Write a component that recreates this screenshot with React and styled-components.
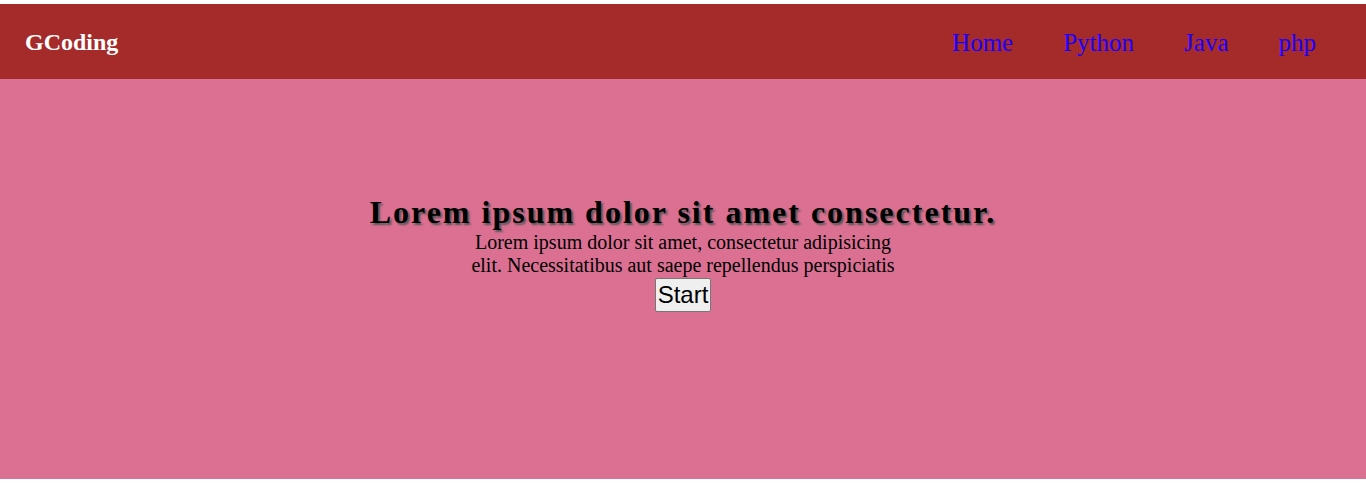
import React from 'react'
import styled, { createGlobalStyle } from 'styled-components'

const GlobalStyle = createGlobalStyle`
  body {
    margin: 0;
    padding-top: 4px;
    background: #ffffff;
    font-family: "Liberation Serif", "Times New Roman", serif;
  }
`;

const links = ['Home', 'Python', 'Java', 'php'];

const App = () => {
    return (
        <>
            <GlobalStyle />
            <Navbar>
                <Logo>GCoding</Logo>
                <NavList>
                    {links.map(link => (
                        <NavItem key={link}>
                            <NavLink href="#">{link}</NavLink>
                        </NavItem>
                    ))}
                </NavList>
            </Navbar>
            <Hero>
                <Title>Lorem ipsum dolor sit amet consectetur.</Title>
                <Text>
                    Lorem ipsum dolor sit amet, consectetur adipisicing elit. Necessitatibus aut saepe repellendus perspiciatis
                </Text>
                <StartButton>Start</StartButton>
            </Hero>
        </>
    )
}

export default App;

const Navbar = styled.nav`
  height: 75px;
  background-color: #a52a2a;
  display: flex;
  align-items: center;
  justify-content: space-between;
  padding: 0 25px;
`;

const Logo = styled.div`
  margin-top: 2px;
  font-size: 24px;
  font-weight: 700;
  color: #ffffff;
`;

const NavList = styled.ul`
  list-style: none;
  display: flex;
  gap: 50px;
  margin: 2px 0 0;
  padding: 0 25px 0 0;
`;

const NavItem = styled.li`
  font-size: 25px;
`;

const NavLink = styled.a`
  color: #1a00ff;
  text-decoration: none;
`;

const Hero = styled.section`
  height: 400px;
  box-sizing: border-box;
  background-color: #db7093;
  display: flex;
  flex-direction: column;
  align-items: center;
  padding-top: 115px;
`;

const Title = styled.h1`
  margin: 0;
  font-size: 32px;
  font-weight: 700;
  letter-spacing: 2px;
  color: #000000;
  text-shadow: 2px 2px 2px #555555;
`;

const Text = styled.p`
  margin: 0;
  width: 440px;
  text-align: center;
  font-size: 20px;
  line-height: 23px;
  color: #000000;
`;

const StartButton = styled.button`
  margin-top: 1px;
  font-family: "Liberation Sans", Arial, sans-serif;
  font-size: 24px;
  padding: 2px 2px;
  color: #000000;
  background: #efefef;
  border: 1px solid #767676;
  border-radius: 2px;
`;
